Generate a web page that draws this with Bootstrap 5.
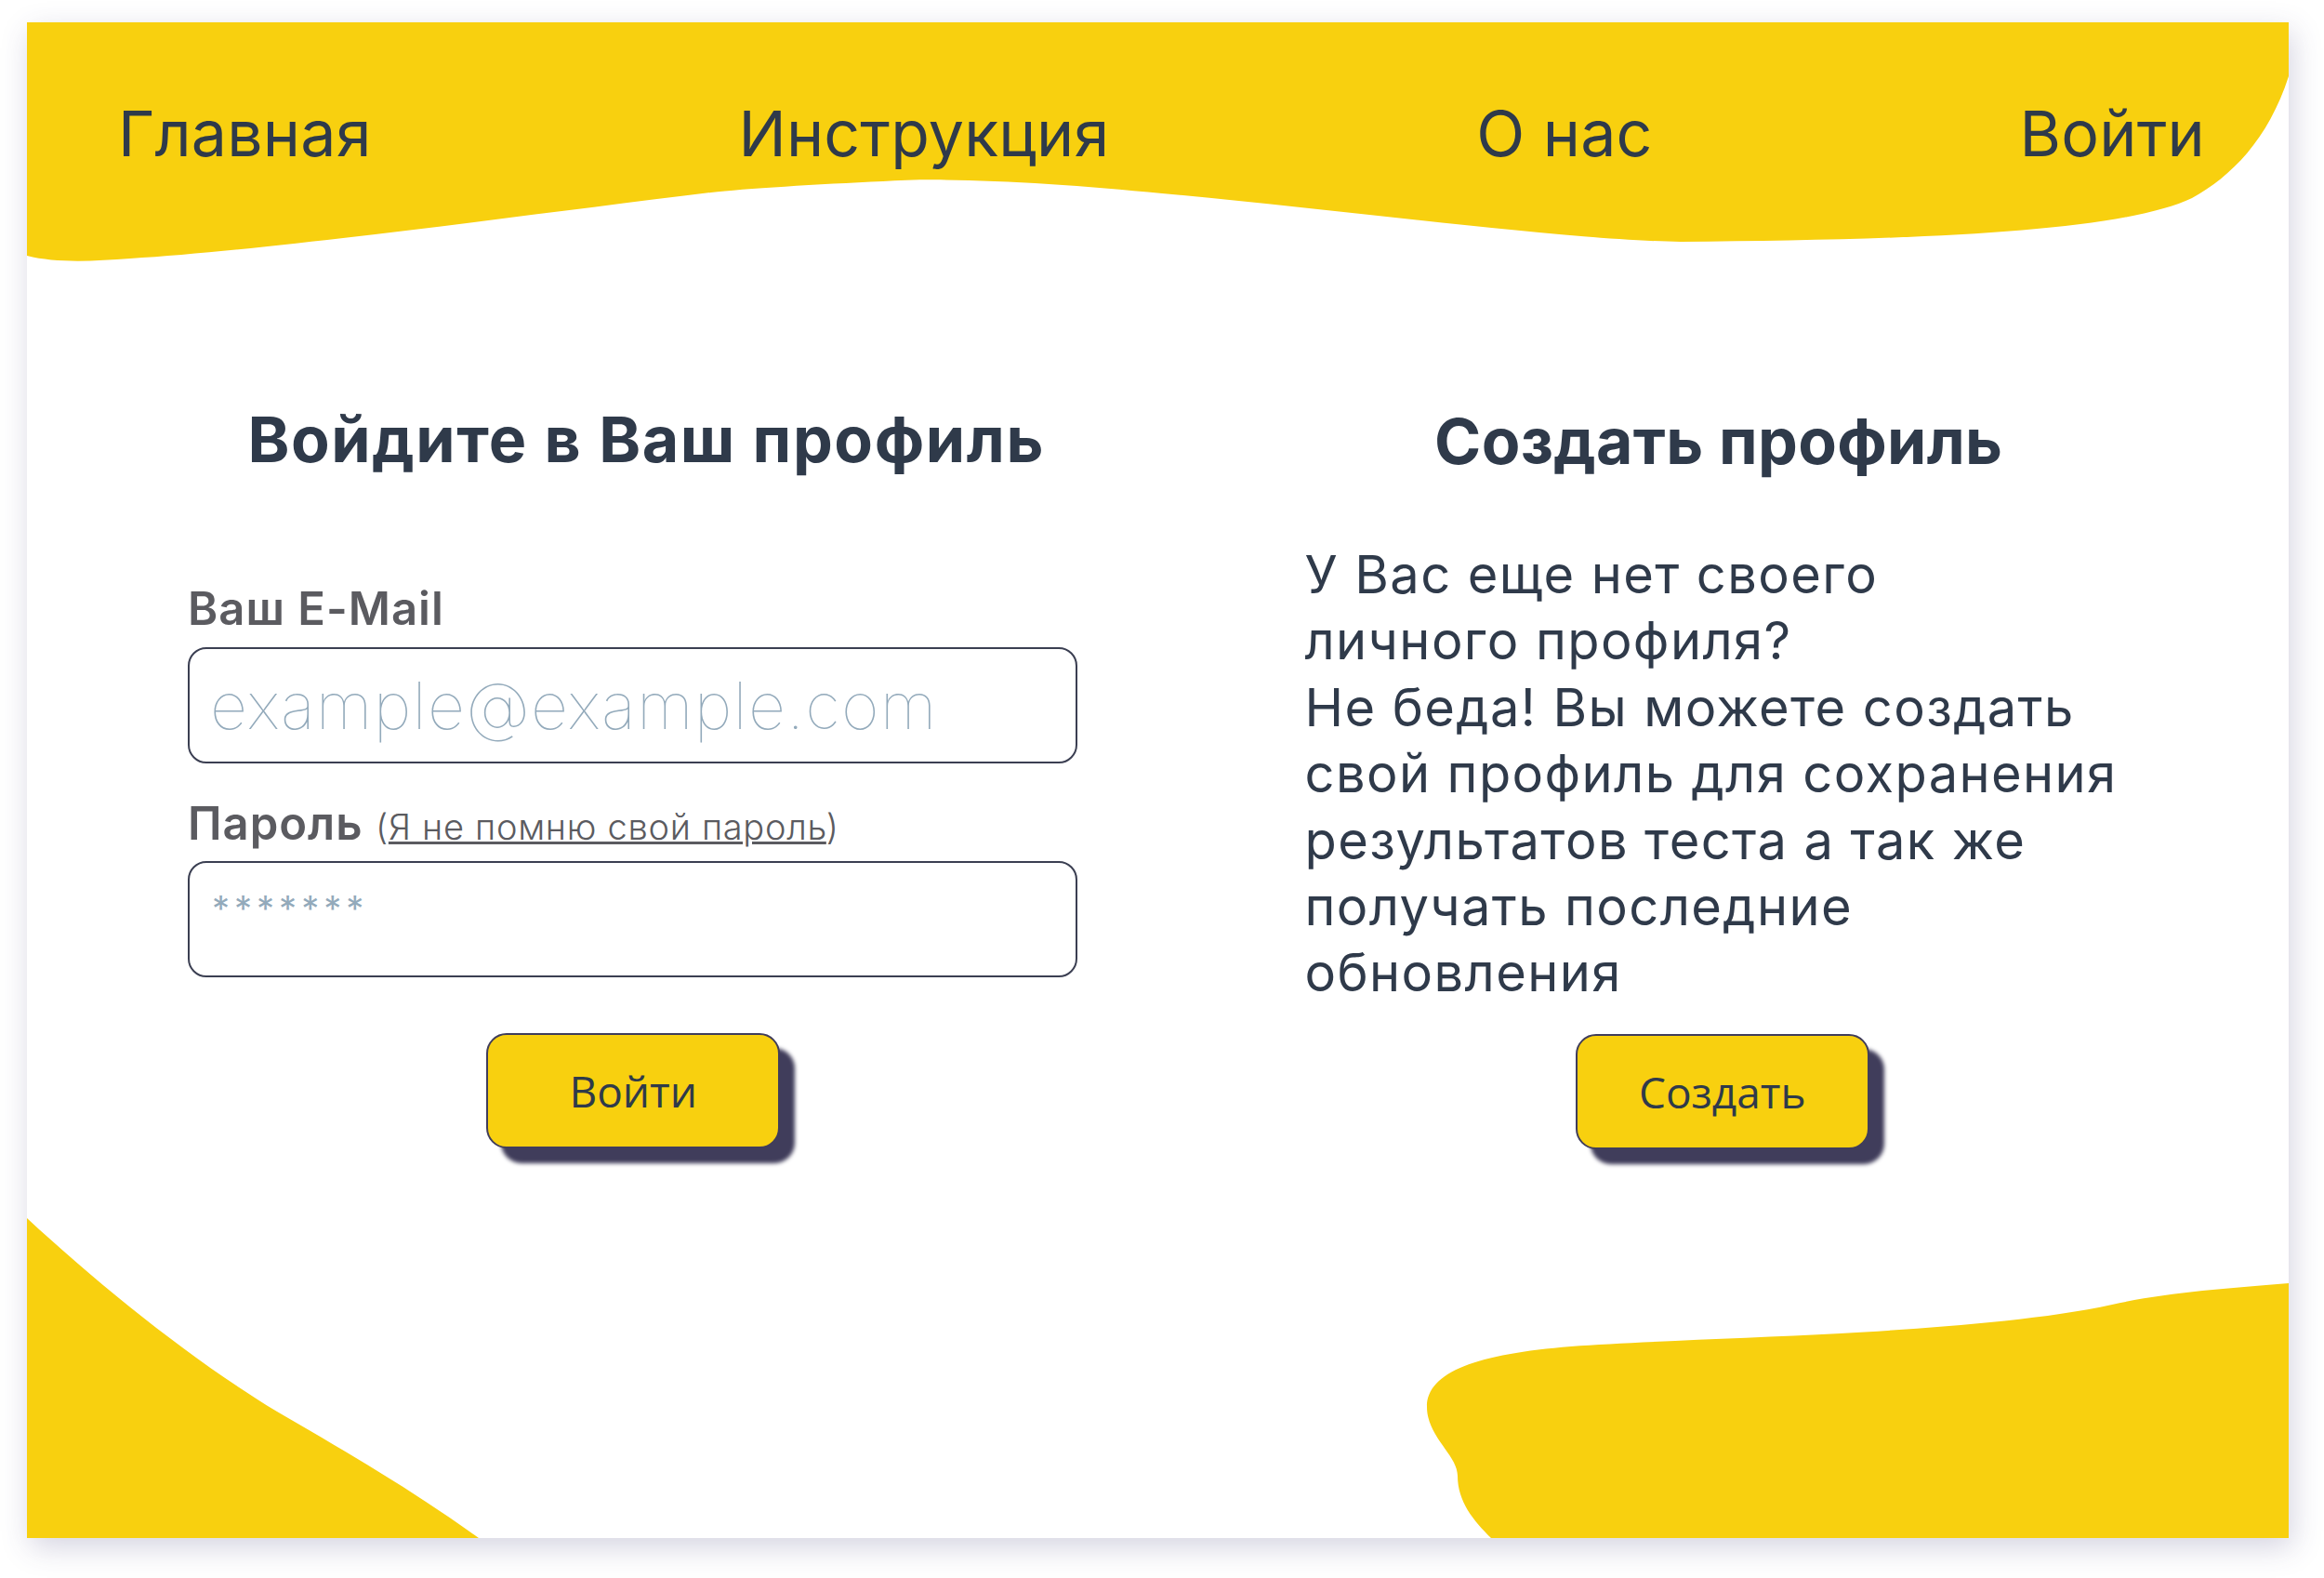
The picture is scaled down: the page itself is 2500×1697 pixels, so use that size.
<!DOCTYPE html>
<html lang="ru">
<head>
<meta charset="utf-8">
<title>Вход</title>
<link href="https://cdn.jsdelivr.net/npm/bootstrap@5.3.0/dist/css/bootstrap.min.css" rel="stylesheet">
<style>
body{margin:0;background:#fff;font-family:"Inter","Noto Sans",sans-serif;color:#2f3a4a}
.page{padding:24px 38px 43px 29px}
.panel{position:relative;height:1630px;background:#fff;box-shadow:4px 10px 30px rgba(64,61,120,.22);overflow:hidden}
.blobs{position:absolute;inset:0;width:100%;height:100%;z-index:0}
.blobs path{fill:#f8d00f}
.content{position:relative;z-index:1}
.topnav{padding:74px 90px 0 98px}
.topnav .nav-link{padding:0;font-size:68px;line-height:90px;font-weight:400;color:#2f3a4a;letter-spacing:.2px}
.columns{padding-top:244px}
.left{padding:0 87px 0 173px}
.right{padding:2px 0 0}
h2.title{font-size:68px;line-height:80px;font-weight:700;color:#2f3a4a;margin:0 10px 0 0;text-align:center;letter-spacing:.3px}
.left h2.title{margin-left:-30px;margin-right:-60px;letter-spacing:1.6px}
.form-label{display:block;margin:0 0 11px;font-size:49px;line-height:60px;font-weight:600;color:#5b5b60;letter-spacing:1px}
.pw-label{margin-top:35px;margin-bottom:7px}
.hint{font-size:38px;font-weight:300;letter-spacing:.7px}
.hint a{color:#5b5b60}
.form-control{height:125px;border:2px solid #3b3f52;border-radius:20px;box-shadow:none;padding:0 22px;font-size:70px;font-weight:100;letter-spacing:1.2px;color:#2f3a4a}
.form-control::placeholder{color:#93aabb;opacity:1}
#password{font-size:38px;font-weight:400;padding:0 24px 24px;letter-spacing:5px}
.mail-row{padding-top:113px}
.act{margin-top:60px}
.btn-go{width:316px;height:124px;padding:0;background:#f8d00f;border:2px solid #403d5b;border-radius:22px;box-shadow:16px 16px 4px #403d5b;color:#2f3a4a;font-family:"Open Sans",sans-serif;font-size:46px;line-height:120px}
.btn-go:hover{background:#f8d00f;color:#2f3a4a;border-color:#403d5b}
.left .btn-go{margin-left:2px}
.right .btn-go{margin-right:2px}
.lead-text{margin:69px 0 0;padding-left:158px;font-size:56px;line-height:71.4px;font-weight:400;color:#2f3a4a;letter-spacing:1.4px}
.right .act{margin-top:29px}
</style>
</head>
<body>
<div class="page">
<div class="panel">
<svg class="blobs" viewBox="29 24 2433 1630" preserveAspectRatio="none" aria-hidden="true">
<path d="M29 24H2462V82C2440 150 2400 190 2358 213C2280 250 2060 258 1808 260C1680 258 1440 225 1250 208C1140 197 1020 190 950 195C880 198 800 203 765 207C560 232 300 268 140 278C100 281 60 283 29 275Z"/>
<path d="M29 1310C110 1385 210 1465 298 1518C370 1560 440 1600 515 1654H29Z"/>
<path d="M2462 1380C2390 1386 2330 1390 2272 1403C2190 1421 2066 1429 1980 1434C1880 1439 1760 1443 1690 1448C1590 1456 1535 1475 1535 1513C1535 1545 1568 1565 1568 1587C1568 1615 1585 1635 1604 1654H2462Z"/>
</svg>
<div class="content">
<nav class="nav justify-content-between topnav">
<a class="nav-link" href="#">Главная</a>
<a class="nav-link" href="#">Инструкция</a>
<a class="nav-link" href="#">О нас</a>
<a class="nav-link" href="#">Войти</a>
</nav>
<div class="row g-0 columns">
<div class="col-6 left">
<h2 class="title">Войдите в Ваш профиль</h2>
<form>
<div class="mail-row">
<label class="form-label" for="email">Ваш E-Mail</label>
<input class="form-control" id="email" type="text" placeholder="example@example.com">
</div>
<label class="form-label pw-label" for="password">Пароль <span class="hint">(<a href="#">Я не помню свой пароль</a>)</span></label>
<input class="form-control" id="password" type="text" placeholder="*******">
<div class="d-flex justify-content-center act"><button class="btn btn-go" type="button">Войти</button></div>
</form>
</div>
<div class="col-6 right">
<h2 class="title">Создать профиль</h2>
<p class="lead-text">У Вас еще нет своего<br>личного профиля?<br>Не беда! Вы можете создать<br>свой профиль для сохранения<br>результатов теста а так же<br>получать последние<br>обновления</p>
<div class="d-flex justify-content-center act"><button class="btn btn-go" type="button">Создать</button></div>
</div>
</div>
</div>
</div>
</div>
<script src="https://cdn.jsdelivr.net/npm/bootstrap@5.3.0/dist/js/bootstrap.bundle.min.js"></script>
</body>
</html>
